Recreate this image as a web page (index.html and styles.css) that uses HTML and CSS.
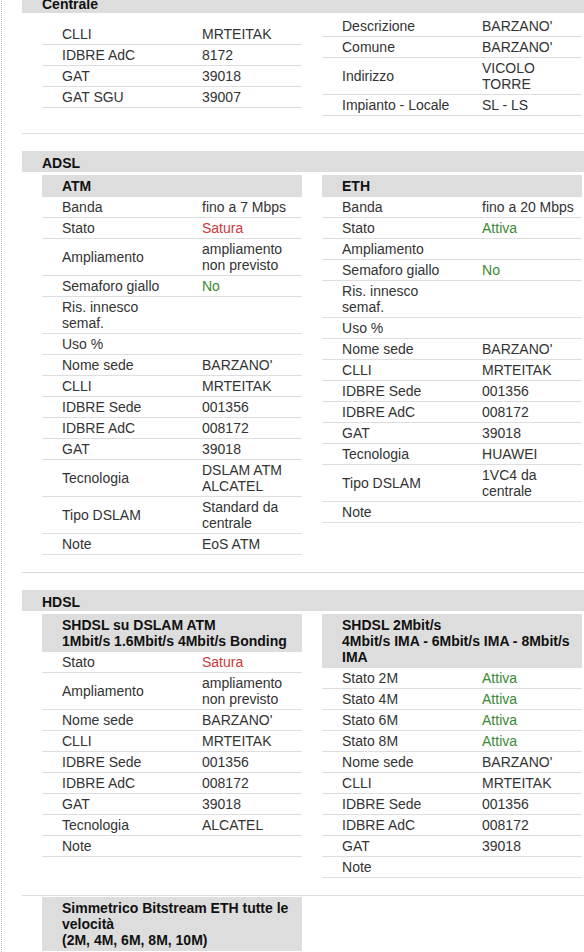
FILE: index.html
```html
<!DOCTYPE html>
<html lang="it">
<head>
<meta charset="utf-8">
<title>Centrale</title>
<link rel="stylesheet" href="styles.css">
</head>
<body>
<div class="page">

  <section class="sec">
    <div class="sec-title">Centrale</div>
    <div class="pair center">
      <table class="info">
        <colgroup><col class="c1"><col class="c2"></colgroup>
        <tr><td class="k">CLLI</td><td class="v">MRTEITAK</td></tr>
        <tr><td class="k">IDBRE AdC</td><td class="v">8172</td></tr>
        <tr><td class="k">GAT</td><td class="v">39018</td></tr>
        <tr><td class="k">GAT SGU</td><td class="v">39007</td></tr>
      </table>
      <table class="info">
        <colgroup><col class="c1"><col class="c2"></colgroup>
        <tr><td class="k">Descrizione</td><td class="v">BARZANO'</td></tr>
        <tr><td class="k">Comune</td><td class="v">BARZANO'</td></tr>
        <tr><td class="k">Indirizzo</td><td class="v">VICOLO TORRE</td></tr>
        <tr><td class="k">Impianto - Locale</td><td class="v">SL - LS</td></tr>
      </table>
    </div>
  </section>

  <section class="sec">
    <div class="sec-title">ADSL</div>
    <div class="pair">
      <table class="info">
        <colgroup><col class="c1"><col class="c2"></colgroup>
        <tr><th colspan="2">ATM</th></tr>
        <tr><td class="k">Banda</td><td class="v">fino a 7 Mbps</td></tr>
        <tr><td class="k">Stato</td><td class="v red">Satura</td></tr>
        <tr><td class="k">Ampliamento</td><td class="v">ampliamento non previsto</td></tr>
        <tr><td class="k">Semaforo giallo</td><td class="v green">No</td></tr>
        <tr><td class="k">Ris. innesco semaf.</td><td class="v"></td></tr>
        <tr><td class="k">Uso %</td><td class="v"></td></tr>
        <tr><td class="k">Nome sede</td><td class="v">BARZANO'</td></tr>
        <tr><td class="k">CLLI</td><td class="v">MRTEITAK</td></tr>
        <tr><td class="k">IDBRE Sede</td><td class="v">001356</td></tr>
        <tr><td class="k">IDBRE AdC</td><td class="v">008172</td></tr>
        <tr><td class="k">GAT</td><td class="v">39018</td></tr>
        <tr><td class="k">Tecnologia</td><td class="v">DSLAM ATM ALCATEL</td></tr>
        <tr><td class="k">Tipo DSLAM</td><td class="v">Standard da centrale</td></tr>
        <tr><td class="k">Note</td><td class="v">EoS ATM</td></tr>
      </table>
      <table class="info">
        <colgroup><col class="c1"><col class="c2"></colgroup>
        <tr><th colspan="2">ETH</th></tr>
        <tr><td class="k">Banda</td><td class="v">fino a 20 Mbps</td></tr>
        <tr><td class="k">Stato</td><td class="v green">Attiva</td></tr>
        <tr><td class="k">Ampliamento</td><td class="v"></td></tr>
        <tr><td class="k">Semaforo giallo</td><td class="v green">No</td></tr>
        <tr><td class="k">Ris. innesco semaf.</td><td class="v"></td></tr>
        <tr><td class="k">Uso %</td><td class="v"></td></tr>
        <tr><td class="k">Nome sede</td><td class="v">BARZANO'</td></tr>
        <tr><td class="k">CLLI</td><td class="v">MRTEITAK</td></tr>
        <tr><td class="k">IDBRE Sede</td><td class="v">001356</td></tr>
        <tr><td class="k">IDBRE AdC</td><td class="v">008172</td></tr>
        <tr><td class="k">GAT</td><td class="v">39018</td></tr>
        <tr><td class="k">Tecnologia</td><td class="v">HUAWEI</td></tr>
        <tr><td class="k">Tipo DSLAM</td><td class="v">1VC4 da centrale</td></tr>
        <tr><td class="k">Note</td><td class="v"></td></tr>
      </table>
    </div>
  </section>

  <section class="sec">
    <div class="sec-title">HDSL</div>
    <div class="pair">
      <table class="info">
        <colgroup><col class="c1"><col class="c2"></colgroup>
        <tr><th colspan="2">SHDSL su DSLAM ATM<br>1Mbit/s 1.6Mbit/s 4Mbit/s Bonding</th></tr>
        <tr><td class="k">Stato</td><td class="v red">Satura</td></tr>
        <tr><td class="k">Ampliamento</td><td class="v">ampliamento non previsto</td></tr>
        <tr><td class="k">Nome sede</td><td class="v">BARZANO'</td></tr>
        <tr><td class="k">CLLI</td><td class="v">MRTEITAK</td></tr>
        <tr><td class="k">IDBRE Sede</td><td class="v">001356</td></tr>
        <tr><td class="k">IDBRE AdC</td><td class="v">008172</td></tr>
        <tr><td class="k">GAT</td><td class="v">39018</td></tr>
        <tr><td class="k">Tecnologia</td><td class="v">ALCATEL</td></tr>
        <tr><td class="k">Note</td><td class="v"></td></tr>
      </table>
      <table class="info">
        <colgroup><col class="c1"><col class="c2"></colgroup>
        <tr><th colspan="2">SHDSL 2Mbit/s<br>4Mbit/s IMA - 6Mbit/s IMA - 8Mbit/s IMA</th></tr>
        <tr><td class="k">Stato 2M</td><td class="v green">Attiva</td></tr>
        <tr><td class="k">Stato 4M</td><td class="v green">Attiva</td></tr>
        <tr><td class="k">Stato 6M</td><td class="v green">Attiva</td></tr>
        <tr><td class="k">Stato 8M</td><td class="v green">Attiva</td></tr>
        <tr><td class="k">Nome sede</td><td class="v">BARZANO'</td></tr>
        <tr><td class="k">CLLI</td><td class="v">MRTEITAK</td></tr>
        <tr><td class="k">IDBRE Sede</td><td class="v">001356</td></tr>
        <tr><td class="k">IDBRE AdC</td><td class="v">008172</td></tr>
        <tr><td class="k">GAT</td><td class="v">39018</td></tr>
        <tr><td class="k">Note</td><td class="v"></td></tr>
      </table>
    </div>
  </section>

  <section class="sec tail">
    <div class="pair">
      <table class="info">
        <colgroup><col class="c1"><col class="c2"></colgroup>
        <tr><th colspan="2">Simmetrico Bitstream ETH tutte le velocità<br>(2M, 4M, 6M, 8M, 10M)</th></tr>
        <tr><td class="k">Stato</td><td class="v green">Attiva</td></tr>
      </table>
    </div>
  </section>

</div>
</body>
</html>
```

FILE: styles.css
```css
html, body {
  margin: 0;
  padding: 0;
  background: #ffffff;
  overflow: hidden;
}

body {
  font-family: "Liberation Sans", Arial, sans-serif;
  font-size: 14px;
  line-height: 16px;
  color: #333333;
}

.page {
  width: 640px;
  margin-left: 1px;
  border-left: 1px dotted #c4c4c4;
  padding-left: 20px;
  min-height: 1000px;
}

.sec {
  border-bottom: 1px solid #dddddd;
  padding-bottom: 17px;
}

.sec-title {
  margin-top: 17px;
  background: #dddddd;
  padding: 4px 20px 1px 20px;
  height: 16px;
  font-weight: bold;
  color: #111111;
}

.sec:first-child .sec-title {
  margin-top: -8px;
}

.pair {
  display: flex;
  align-items: flex-start;
  gap: 20px;
  padding-left: 20px;
  margin-top: 3px;
}

.pair.center {
  align-items: center;
}

.tail .pair {
  margin-top: 1px;
}

.info {
  width: 260px;
  table-layout: fixed;
  border-collapse: collapse;
  border-spacing: 0;
}

.info .c1 { width: 160px; }
.info .c2 { width: 100px; }

.info th {
  background: #dddddd;
  color: #111111;
  font-weight: bold;
  text-align: left;
  padding: 3px 0 3px 20px;
  line-height: 16px;
}

.info td {
  border-bottom: 1px solid #dedede;
  vertical-align: middle;
  padding: 2px 0;
  line-height: 16px;
}

.info td.k {
  padding-left: 20px;
  padding-right: 20px;
}

.info td.v {
  padding-right: 0;
}

.red { color: #cc3a3a; }
.green { color: #3a8a34; }
```
